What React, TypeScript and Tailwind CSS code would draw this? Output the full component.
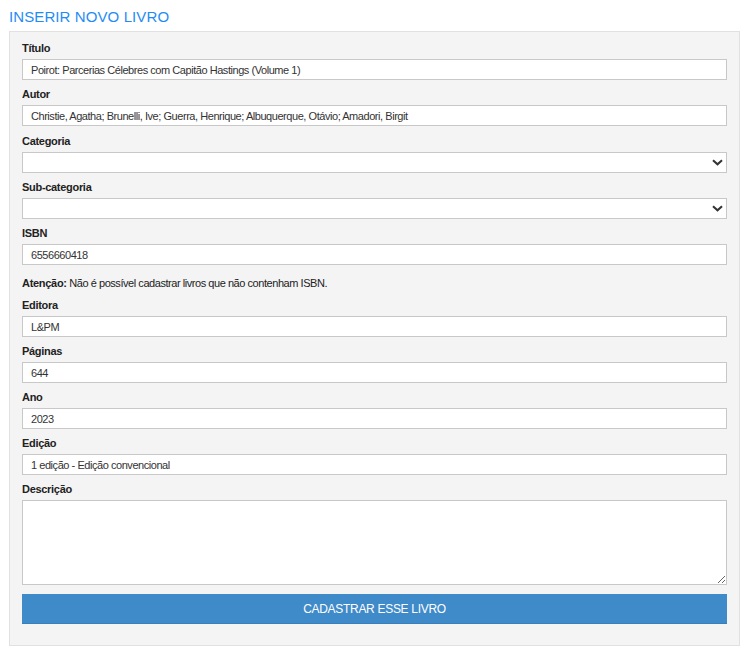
import React from "react";

const font = { fontFamily: "Tahoma, 'Liberation Sans', Arial, sans-serif" };

type Field = {
  label: string;
  value?: string;
  kind?: "input" | "select";
  gap?: string;
};

// campos antes do aviso de ISBN
const topFields: Field[] = [
  { label: "Título", value: "Poirot: Parcerias Célebres com Capitão Hastings (Volume 1)" },
  {
    label: "Autor",
    value: "Christie, Agatha; Brunelli, Ive; Guerra, Henrique; Albuquerque, Otávio; Amadori, Birgit",
    gap: "mb-[8px]",
  },
  { label: "Categoria", kind: "select" },
  { label: "Sub-categoria", kind: "select" },
  { label: "ISBN", value: "6556660418" },
];

const bottomFields: Field[] = [
  { label: "Editora", value: "L&PM" },
  { label: "Páginas", value: "644" },
  { label: "Ano", value: "2023" },
  { label: "Edição", value: "1 edição - Edição convencional" },
];

function Label({ children }: { children: React.ReactNode }) {
  return (
    <div className="h-[14px] leading-[14px] text-[11px] font-bold text-[#222] tracking-[-0.3px] mb-[4px]">
      {children}
    </div>
  );
}

function FormField({ field }: { field: Field }) {
  return (
    <div className={field.gap ?? "mb-[7px]"}>
      <Label>{field.label}</Label>
      {field.kind === "select" ? (
        <div className="relative h-[21px]">
          <select
            className="appearance-none w-full h-[21px] bg-white border border-[#c8c8c8] outline-none"
            defaultValue=""
          >
            <option value=""></option>
          </select>
          {/* seta do select */}
          <svg
            className="absolute right-[4px] top-[7px] pointer-events-none"
            width="11"
            height="7"
            viewBox="0 0 11 7"
          >
            <path d="M1 1.2 L5.5 5.3 L10 1.2" fill="none" stroke="#333" strokeWidth="2" />
          </svg>
        </div>
      ) : (
        <input
          readOnly
          value={field.value}
          className="block w-full h-[21px] bg-white border border-[#c8c8c8] px-[8px] text-[11px] text-[#333] tracking-[-0.45px] outline-none"
          style={font}
        />
      )}
    </div>
  );
}

export default function App() {
  return (
    <div className="w-[751px] h-[658px] bg-white pt-[8px] pl-[9px]" style={font}>
      <h1 className="h-[18px] leading-[18px] text-[15px] text-[#1f8cf5] mb-[5px] tracking-[0.1px]">
        INSERIR NOVO LIVRO
      </h1>

      <div className="w-[731px] bg-[#f4f4f4] border border-[#e1e1e1] pt-[9px] px-[12px] pb-[21px]">
        {topFields.map((f) => (
          <FormField key={f.label} field={f} />
        ))}

        <div className="pt-[4px] pb-[8px] h-[26px] leading-[14px] text-[11px] text-[#222] tracking-[-0.45px]">
          <span className="font-bold tracking-[-0.3px]">Atenção:</span> Não é possível cadastrar livros que não
          contenham ISBN.
        </div>

        {bottomFields.map((f) => (
          <FormField key={f.label} field={f} />
        ))}

        <div>
          <Label>Descrição</Label>
          <textarea className="block w-full h-[85px] bg-white border border-[#c8c8c8] outline-none" />
        </div>

        <button className="block w-full h-[30px] mt-[9px] bg-[#3f8ac9] border-b border-[#3a7fbd] text-white text-[12px] tracking-[-0.3px]">
          CADASTRAR ESSE LIVRO
        </button>
      </div>
    </div>
  );
}
